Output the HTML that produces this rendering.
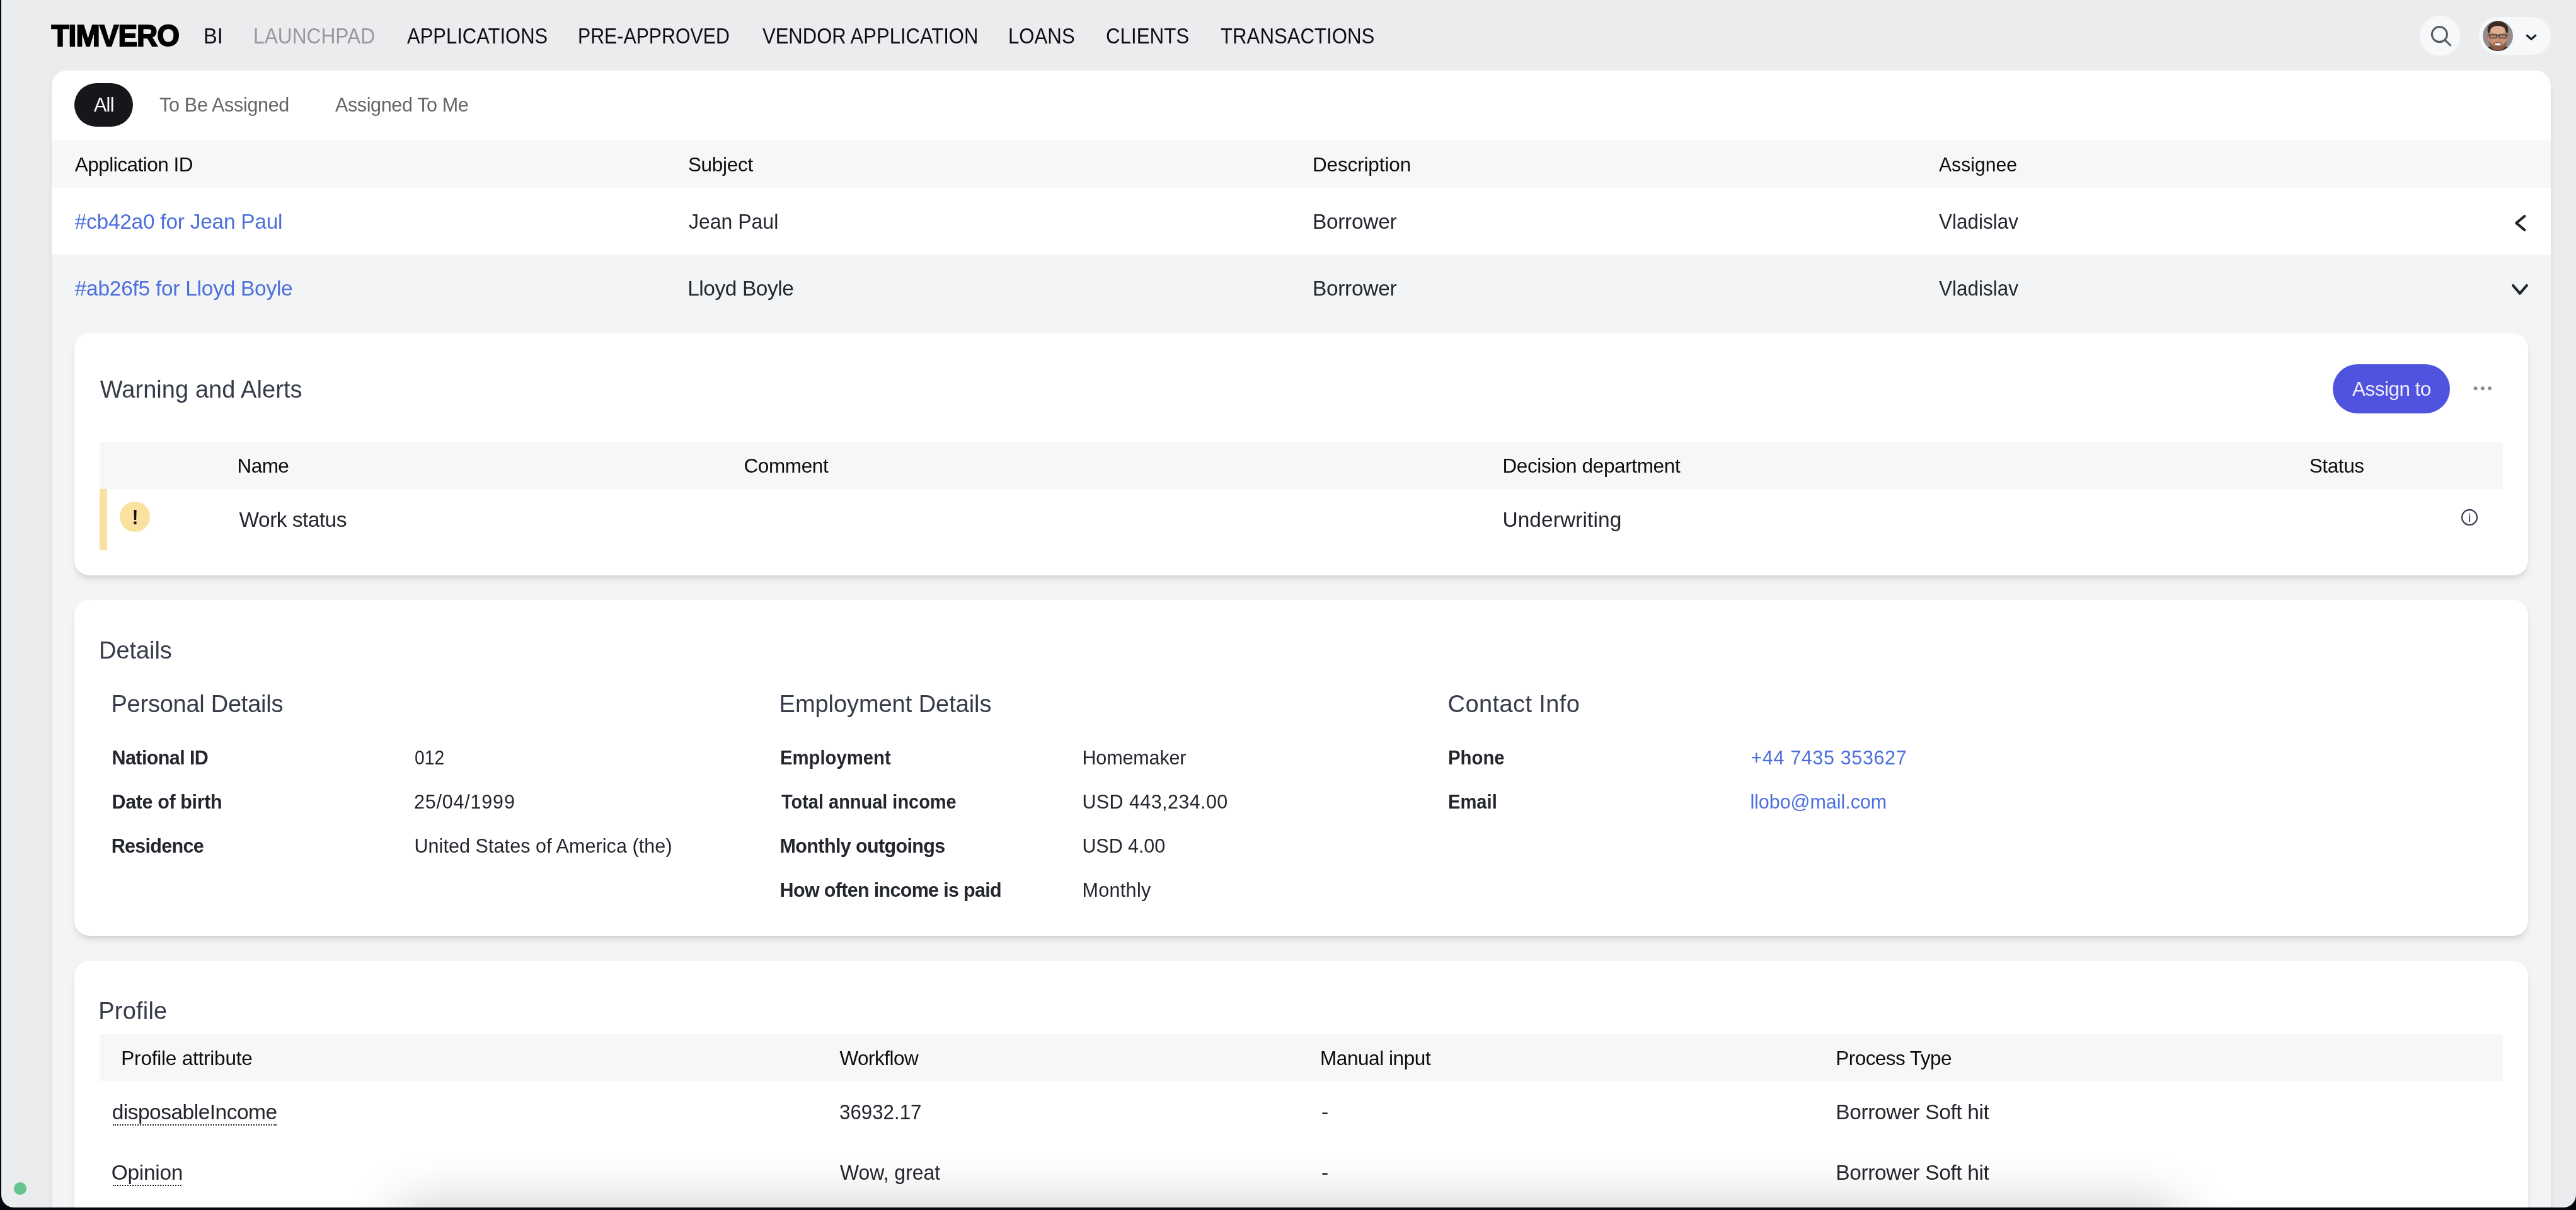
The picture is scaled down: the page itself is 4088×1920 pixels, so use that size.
<!DOCTYPE html>
<html lang="en">
<head>
<meta charset="utf-8">
<title>Timvero – Launchpad</title>
<style>
html,body{margin:0;padding:0}
body{width:4088px;height:1920px;overflow:hidden;background:#03050f;font-family:"Liberation Sans",Arial,sans-serif;position:relative}
.win{position:absolute;left:2px;top:0;width:4086px;height:1915.5px;background:#ebecee;border-radius:0 0 20px 20px;overflow:hidden}
.g{position:absolute;left:-2px;top:0;width:4088px;height:1920px;will-change:transform}
.g div,.g span,.g svg{position:absolute}
.t{white-space:nowrap;line-height:1;font-weight:400}
.b{font-weight:700}
.sx{transform-origin:0 0}
.main{left:82px;top:112px;width:3966px;height:1900px;background:#fff;border-radius:24px 24px 0 0;box-shadow:0 8px 12px -2px rgba(0,0,0,.10),0 4px 8px -4px rgba(0,0,0,.10)}
.thead{left:82px;top:223px;width:3966px;height:75px;background:#f7f7f8}
.open{left:82px;top:404px;width:3966px;height:1600px;background:#f3f4f6}
.card{left:118px;width:3894px;background:#fff;border-radius:24px;box-shadow:0 8px 12px -2px rgba(0,0,0,.10),0 4px 8px -4px rgba(0,0,0,.10)}
.ih{left:158px;width:3814px;background:#f7f7f8}
.pill{left:118px;top:132px;width:93px;height:68.6px;border-radius:35px;background:#15171b}
.sbtn{left:3840px;top:25px;width:64px;height:64px;border-radius:50%;background:#f7f8fa}
.upill{left:3934px;top:27px;width:114px;height:60px;border-radius:30px;background:#f7f8fa}
.assign{left:3702px;top:578px;width:186px;height:78px;border-radius:39px;background:#5053dd}
.ybar{left:158px;top:775.5px;width:12px;height:97.5px;background:#fae19f}
.ydot{left:190px;top:796px;width:48px;height:48px;border-radius:50%;background:#fae19f}
.gdot{left:22px;top:1876px;width:20px;height:20px;border-radius:50%;background:#63c58b}
.dots{left:178.7px;height:0;border-top:2.2px dotted #23262d}
.bshadow{left:630px;top:1925px;width:2830px;height:60px;border-radius:30px;box-shadow:0 0 90px rgba(0,0,0,.30)}
.logo{left:81.5px;top:33px;font-size:46px;font-weight:700;line-height:1;color:#000;white-space:nowrap;letter-spacing:-1px;-webkit-text-stroke:1.8px #000;transform-origin:0 0;transform:scale(1,1.03)}
</style>
</head>
<body>
<div class="win"><div class="g">

<!-- top navigation -->
<span class="logo">TIMVERO</span>
<div class="sbtn"></div>
<svg style="left:3852px;top:37px" width="44" height="44" viewBox="0 0 44 44" fill="none" stroke="#575a61" stroke-width="3" stroke-linecap="round"><circle cx="19.4" cy="17.6" r="12"/><path d="M28.2 26.6 L36.8 35"/></svg>
<div class="upill"></div>
<svg style="left:3940px;top:33px" width="48" height="48" viewBox="0 0 48 48">
  <defs><clipPath id="av"><circle cx="24" cy="24" r="24"/></clipPath></defs>
  <g clip-path="url(#av)">
    <rect width="48" height="48" fill="#8e8e8e"/>
    <path d="M0 48 L0 45 Q10 41 15 40 L33 40 Q38 41 48 45 L48 48Z" fill="#2a2b2f"/>
    <ellipse cx="24" cy="14" rx="16.5" ry="13.5" fill="#3a2a20"/>
    <ellipse cx="7.6" cy="25.5" rx="2.4" ry="4.2" fill="#b98268"/>
    <ellipse cx="40.4" cy="25.5" rx="2.4" ry="4.2" fill="#b98268"/>
    <ellipse cx="24" cy="27.5" rx="15" ry="19.5" fill="#c98f72"/>
    <ellipse cx="24" cy="14.5" rx="11.5" ry="6.5" fill="#dcae92"/>
    <path d="M9.6 31 Q11 47.5 24 47.5 Q37 47.5 38.4 31 Q33 41 24 41 Q15 41 9.6 31Z" fill="#8a5a43"/>
    <path d="M16.5 35.2 Q24 33.2 31.5 35.2 Q30 41 24 41 Q18 41 16.5 35.2Z" fill="#6d4030"/>
    <path d="M18 36 Q24 34.6 30 36 Q28.6 39.6 24 39.6 Q19.4 39.6 18 36Z" fill="#f3efec"/>
    <path d="M11 22h11v5.4H11zM26 22h11v5.4H26z" fill="rgba(70,60,55,.18)" stroke="#3c3c3f" stroke-width="1.3"/>
    <path d="M22 23.6h4M7 22.8l4 .6M37 23.4l4-.6" stroke="#3c3c3f" stroke-width="1.1" fill="none"/>
  </g>
</svg>
<svg style="left:4004px;top:50px" width="26" height="18" viewBox="0 0 26 18" fill="none" stroke="#1f222a" stroke-width="3.2" stroke-linecap="round" stroke-linejoin="round"><path d="M6.3 6.2 L13 12.2 L19.7 6.2"/></svg>

<!-- main white card -->
<div class="main"></div>
<div class="pill"></div>
<div class="thead"></div>
<div class="open"></div>
<svg style="left:3982px;top:334px" width="36" height="40" viewBox="0 0 36 40" fill="none" stroke="#22252b" stroke-width="4.2" stroke-linecap="round" stroke-linejoin="round"><path d="M24.4 9 L11.3 19.95 L24.4 30.9"/></svg>
<svg style="left:3980px;top:442px" width="40" height="36" viewBox="0 0 40 36" fill="none" stroke="#22252b" stroke-width="4.2" stroke-linecap="round" stroke-linejoin="round"><path d="M8.1 11 L18.95 23.7 L29.8 11"/></svg>

<!-- Warning and Alerts -->
<div class="card" style="top:528.5px;height:384px"></div>
<div class="assign"></div>
<svg style="left:3922px;top:610px" width="36" height="12" viewBox="0 0 36 12" fill="#8b8e95"><circle cx="6.6" cy="6.3" r="3"/><circle cx="17.8" cy="6.3" r="3"/><circle cx="29" cy="6.3" r="3"/></svg>
<div class="ih" style="top:701px;height:74.5px"></div>
<div class="ybar"></div>
<div class="ydot"></div>
<span class="t b" style="left:208.6px;top:804px;font-size:33.6px;color:#111;transform:scaleX(.86)">!</span>
<svg style="left:3903px;top:805px" width="32" height="32" viewBox="0 0 32 32"><circle cx="16" cy="15.9" r="11.9" fill="none" stroke="#3f4553" stroke-width="2.4"/><text x="16" y="22.7" text-anchor="middle" font-family="Liberation Sans,Arial,sans-serif" font-size="18.6" font-weight="400" fill="#3d424e" stroke="#3d424e" stroke-width=".35">i</text></svg>

<!-- Details -->
<div class="card" style="top:952px;height:532.5px"></div>

<!-- Profile -->
<div class="card" style="top:1525px;height:500px"></div>
<div class="ih" style="top:1641px;height:74.3px"></div>
<div class="dots" style="top:1783.6px;width:260.4px"></div>
<div class="dots" style="top:1879.7px;width:109.2px"></div>

<span class="t sx" style="left:322.9px;top:40.0px;font-size:34.5px;transform:scaleX(0.9444);color:#0d0e11">BI</span>
<span class="t sx" style="left:401.7px;top:40.0px;font-size:34.5px;transform:scaleX(0.9187);color:#98999c">LAUNCHPAD</span>
<span class="t sx" style="left:645.8px;top:40.0px;font-size:34.5px;transform:scaleX(0.8978);color:#0d0e11">APPLICATIONS</span>
<span class="t sx" style="left:917.4px;top:40.0px;font-size:34.5px;transform:scaleX(0.8785);color:#0d0e11">PRE-APPROVED</span>
<span class="t sx" style="left:1209.8px;top:40.0px;font-size:34.5px;transform:scaleX(0.8989);color:#0d0e11">VENDOR APPLICATION</span>
<span class="t sx" style="left:1600.0px;top:40.0px;font-size:34.5px;transform:scaleX(0.9035);color:#0d0e11">LOANS</span>
<span class="t sx" style="left:1755.3px;top:40.0px;font-size:34.5px;transform:scaleX(0.9070);color:#0d0e11">CLIENTS</span>
<span class="t sx" style="left:1937.0px;top:40.0px;font-size:34.5px;transform:scaleX(0.9041);color:#0d0e11">TRANSACTIONS</span>
<span class="t" style="left:148.9px;top:151.4px;font-size:30.5px;letter-spacing:-0.65px;color:#ffffff">All</span>
<span class="t" style="left:253.1px;top:151.4px;font-size:30.5px;letter-spacing:-0.31px;color:#656567">To Be Assigned</span>
<span class="t" style="left:531.9px;top:151.4px;font-size:30.5px;letter-spacing:-0.35px;color:#656567">Assigned To Me</span>
<span class="t" style="left:118.7px;top:245.6px;font-size:31.5px;letter-spacing:-0.51px;color:#0b0c0e">Application ID</span>
<span class="t" style="left:1091.9px;top:245.6px;font-size:31.5px;letter-spacing:-0.30px;color:#0b0c0e">Subject</span>
<span class="t" style="left:2082.9px;top:245.6px;font-size:31.5px;letter-spacing:-0.13px;color:#0b0c0e">Description</span>
<span class="t sx" style="left:3077.2px;top:245.6px;font-size:31.5px;transform:scaleX(0.9563);color:#0b0c0e">Assignee</span>
<span class="t" style="left:118.7px;top:334.8px;font-size:33.5px;letter-spacing:-0.27px;color:#4c6fdc">#cb42a0 for Jean Paul</span>
<span class="t sx" style="left:1093.2px;top:334.8px;font-size:33.5px;transform:scaleX(0.9548);color:#23262d">Jean Paul</span>
<span class="t" style="left:2082.9px;top:334.8px;font-size:33.5px;letter-spacing:-0.31px;color:#23262d">Borrower</span>
<span class="t sx" style="left:3077.2px;top:334.8px;font-size:33.5px;transform:scaleX(0.9388);color:#23262d">Vladislav</span>
<span class="t" style="left:118.7px;top:440.8px;font-size:33.5px;letter-spacing:-0.27px;color:#4c6fdc">#ab26f5 for Lloyd Boyle</span>
<span class="t" style="left:1091.2px;top:440.8px;font-size:33.5px;letter-spacing:-0.45px;color:#23262d">Lloyd Boyle</span>
<span class="t" style="left:2082.9px;top:440.8px;font-size:33.5px;letter-spacing:-0.31px;color:#23262d">Borrower</span>
<span class="t sx" style="left:3077.2px;top:440.8px;font-size:33.5px;transform:scaleX(0.9388);color:#23262d">Vladislav</span>
<span class="t" style="left:158.7px;top:598.7px;font-size:38px;letter-spacing:0.07px;color:#363b49">Warning and Alerts</span>
<span class="t" style="left:3733.1px;top:602.0px;font-size:31.5px;letter-spacing:-0.54px;color:#eeeefc">Assign to</span>
<span class="t" style="left:376.6px;top:724.4px;font-size:31.5px;letter-spacing:-0.60px;color:#0b0c0e">Name</span>
<span class="t" style="left:1180.4px;top:724.3px;font-size:31.5px;letter-spacing:-0.37px;color:#0b0c0e">Comment</span>
<span class="t" style="left:2384.4px;top:724.3px;font-size:31.5px;letter-spacing:-0.37px;color:#0b0c0e">Decision department</span>
<span class="t" style="left:3664.7px;top:724.3px;font-size:31.5px;letter-spacing:-0.38px;color:#0b0c0e">Status</span>
<span class="t" style="left:379.6px;top:808.2px;font-size:33.5px;letter-spacing:-0.54px;color:#23262d">Work status</span>
<span class="t" style="left:2384.4px;top:808.4px;font-size:33.5px;letter-spacing:0.08px;color:#23262d">Underwriting</span>
<span class="t" style="left:157.0px;top:1012.8px;font-size:38px;letter-spacing:-0.05px;color:#363b49">Details</span>
<span class="t" style="left:176.5px;top:1098.3px;font-size:38px;letter-spacing:-0.25px;color:#363b49">Personal Details</span>
<span class="t" style="left:1236.6px;top:1098.3px;font-size:38px;letter-spacing:-0.06px;color:#363b49">Employment Details</span>
<span class="t" style="left:2297.6px;top:1098.3px;font-size:38px;letter-spacing:0.40px;color:#363b49">Contact Info</span>
<span class="t b" style="left:177.5px;top:1186.7px;font-size:30.5px;letter-spacing:-0.59px;color:#23262d">National ID</span>
<span class="t sx" style="left:658.1px;top:1186.7px;font-size:30.5px;transform:scaleX(0.9265);color:#23262d">012</span>
<span class="t b" style="left:177.5px;top:1256.7px;font-size:30.5px;letter-spacing:-0.38px;color:#23262d">Date of birth</span>
<span class="t" style="left:657.0px;top:1256.7px;font-size:30.5px;letter-spacing:0.80px;color:#23262d">25/04/1999</span>
<span class="t b" style="left:176.7px;top:1326.7px;font-size:30.5px;letter-spacing:-0.70px;color:#23262d">Residence</span>
<span class="t" style="left:657.4px;top:1326.7px;font-size:30.5px;letter-spacing:0.08px;color:#23262d">United States of America (the)</span>
<span class="t b sx" style="left:1237.7px;top:1186.7px;font-size:30.5px;transform:scaleX(0.9597);color:#23262d">Employment</span>
<span class="t" style="left:1717.4px;top:1186.7px;font-size:30.5px;letter-spacing:-0.12px;color:#23262d">Homemaker</span>
<span class="t b sx" style="left:1239.6px;top:1256.7px;font-size:30.5px;transform:scaleX(0.9490);color:#23262d">Total annual income</span>
<span class="t" style="left:1717.4px;top:1256.7px;font-size:30.5px;letter-spacing:0.41px;color:#23262d">USD 443,234.00</span>
<span class="t b" style="left:1237.6px;top:1326.7px;font-size:30.5px;letter-spacing:-0.63px;color:#23262d">Monthly outgoings</span>
<span class="t" style="left:1717.4px;top:1326.7px;font-size:30.5px;letter-spacing:-0.06px;color:#23262d">USD 4.00</span>
<span class="t b" style="left:1237.6px;top:1396.7px;font-size:30.5px;letter-spacing:-0.68px;color:#23262d">How often income is paid</span>
<span class="t" style="left:1717.4px;top:1396.7px;font-size:30.5px;letter-spacing:0.35px;color:#23262d">Monthly</span>
<span class="t b sx" style="left:2297.7px;top:1186.7px;font-size:30.5px;transform:scaleX(0.9622);color:#23262d">Phone</span>
<span class="t" style="left:2778.4px;top:1186.7px;font-size:30.5px;letter-spacing:0.64px;color:#4c6fdc">+44 7435 353627</span>
<span class="t b sx" style="left:2297.7px;top:1256.7px;font-size:30.5px;transform:scaleX(0.9558);color:#23262d">Email</span>
<span class="t" style="left:2777.4px;top:1256.7px;font-size:30.5px;letter-spacing:-0.05px;color:#4c6fdc">llobo@mail.com</span>
<span class="t" style="left:156.3px;top:1584.5px;font-size:38px;letter-spacing:0.20px;color:#363b49">Profile</span>
<span class="t" style="left:192.3px;top:1664.1px;font-size:31.5px;letter-spacing:-0.21px;color:#0b0c0e">Profile attribute</span>
<span class="t" style="left:1332.4px;top:1664.1px;font-size:31.5px;letter-spacing:-0.50px;color:#0b0c0e">Workflow</span>
<span class="t" style="left:2095.0px;top:1664.0px;font-size:31.5px;letter-spacing:-0.43px;color:#0b0c0e">Manual input</span>
<span class="t" style="left:2913.3px;top:1664.0px;font-size:31.5px;letter-spacing:-0.55px;color:#0b0c0e">Process Type</span>
<span class="t" style="left:177.7px;top:1748.4px;font-size:33.5px;letter-spacing:-0.51px;color:#23262d">disposableIncome</span>
<span class="t sx" style="left:1332.1px;top:1748.4px;font-size:33.5px;transform:scaleX(0.9336);color:#23262d">36932.17</span>
<span class="t" style="left:2097.0px;top:1748.4px;font-size:33.5px;letter-spacing:0.00px;color:#23262d">-</span>
<span class="t" style="left:2913.3px;top:1748.4px;font-size:33.5px;letter-spacing:-0.37px;color:#23262d">Borrower Soft hit</span>
<span class="t" style="left:176.7px;top:1844.2px;font-size:33.5px;letter-spacing:-0.30px;color:#23262d">Opinion</span>
<span class="t sx" style="left:1332.6px;top:1844.2px;font-size:33.5px;transform:scaleX(0.9533);color:#23262d">Wow, great</span>
<span class="t" style="left:2097.0px;top:1844.2px;font-size:33.5px;letter-spacing:0.00px;color:#23262d">-</span>
<span class="t" style="left:2913.3px;top:1844.2px;font-size:33.5px;letter-spacing:-0.37px;color:#23262d">Borrower Soft hit</span>

<div class="bshadow"></div>
<div class="gdot"></div>
</div></div>
</body>
</html>
